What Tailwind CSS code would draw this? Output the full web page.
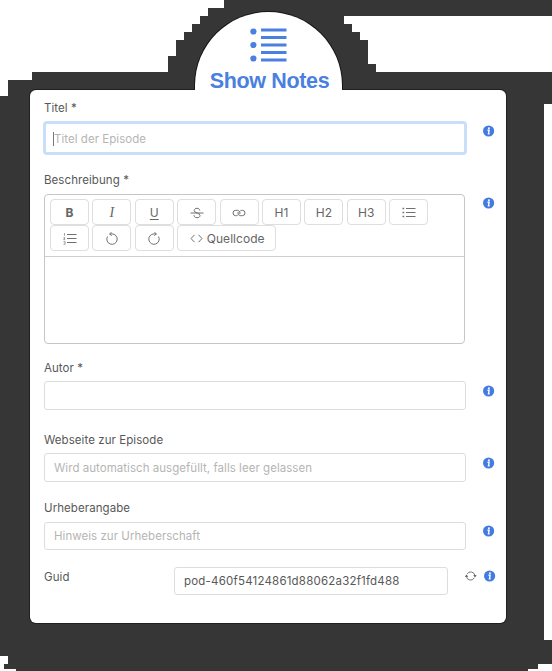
<!DOCTYPE html>
<html lang="de">
<head>
<meta charset="utf-8">
<title>Show Notes</title>
<script src="https://cdn.jsdelivr.net/npm/@tailwindcss/browser@4"></script>
</head>
<body class="relative h-[671px] w-[552px] overflow-hidden bg-[#363636] font-['Inter','Liberation_Sans',sans-serif] text-[11.5px] leading-4 tracking-[0.04px] text-[#585858]">
<svg class="absolute inset-0" width="552" height="671" shape-rendering="crispEdges" fill="#fff" aria-hidden="true">
  <path d="M0 0H224V8H208V16H200V24H192V32H184V40H176V56H168V72H32V80H8V96H0Z"/>
  <path d="M344 16H552V72H376V64H368V40H360V32H352V24H344Z"/>
  <path d="M544 104H552V640H544Z"/>
  <path d="M0 656H8V664H4V669H16V671H0Z"/>
  <path d="M538 664H552V671H528V669H538Z"/>
</svg>
<svg class="hidden" aria-hidden="true">
  <symbol id="info" viewBox="0 0 12 12"><circle cx="5.600" cy="6" r="5.600" fill="#447be0"/><circle cx="5.900" cy="3.300" r=".95" fill="#fff"/><path d="M4.500 5.300h1.600L5.500 8.800h1.100" fill="none" stroke="#fff" stroke-width="1.400"/></symbol>
</svg>
<main class="relative flex flex-col pl-[30px] pt-[12px]">
  <header class="ml-[165px] flex h-[78px] w-[147px] flex-col items-center rounded-t-[73.5px] bg-white shadow-[0_0_0_1px_#171717]">
    <svg class="mt-[16px] h-[34px] w-[38px] shrink-0" viewBox="0 0 38 34" fill="#4a80df"><circle cx="3.400" cy="3.500" r="3.100"/><circle cx="3.400" cy="17" r="3.100"/><circle cx="3.400" cy="30.500" r="3.100"/><path d="M11 .5H36.500v3H11zM11 8H36.500v3H11zM11 15.500H36.500v3H11zM11 23H36.500v3H11zM11 30.500H36.500v3H11z"/></svg>
    <h1 class="mt-[7px] whitespace-nowrap pl-[2px] font-['Liberation_Sans',Arial,sans-serif] text-[21.5px] font-bold leading-6 tracking-[-0.35px] text-[#4a80df]">Show Notes</h1>
  </header>
  <form class="relative flex h-[533px] w-[476px] flex-col rounded-[6px] bg-white pl-[14px] pt-[10px] shadow-[0_0_0_1px_#202020] [&_label]:tracking-[0.07px]">
    <div class="absolute left-[165px] top-[-1px] h-[2px] w-[147px] bg-white"></div>
    <section class="flex h-[71px] w-[451px] justify-between">
      <div class="w-[422px]">
        <label class="block h-[21px]">Titel *</label>
        <div class="-ml-px flex h-[34px] w-[424px] items-center rounded-[4px] border-[3px] border-[#c8def9] pl-[7px] pt-px text-[#b5b5b5]"><span class="h-[14px] w-px bg-[#777]"></span>Titel der Episode</div>
      </div>
      <svg class="mt-[25px] size-[12px]"><use href="#info"/></svg>
    </section>
    <section class="flex h-[188px] w-[451px] justify-between">
      <div class="w-[422px]">
        <label class="block h-[23px] pt-px">Beschreibung *</label>
        <div class="h-[150px] w-[421px] rounded-[4px] border border-[#c6c6c6]">
          <div class="flex h-[62px] flex-wrap content-start gap-x-[3.400px] border-b border-[#cfcfcf] pl-[5px] pt-[4px] text-[12px] text-[#666] [&>*]:flex [&>*]:h-[26px] [&>*]:w-[39px] [&>*]:items-center [&>*]:justify-center [&>*]:rounded-[4px] [&>*]:border [&>*]:border-[#dedede] [&>*]:pt-px [&_svg]:fill-none [&_svg]:stroke-[#707070]">
            <span class="font-bold">B</span>
            <span class="font-['Liberation_Serif',serif] text-[14px] italic">I</span>
            <span class="underline underline-offset-2">U</span>
            <span><svg width="14" height="12" viewBox="0 0 14 12"><path d="M.5 6h13M9.800 3.500C9.600 2 8.500 1.300 7 1.300S4.200 2 4.200 3.500c0 3 5.800 2 5.800 5 0 1.400-1.200 2.200-3 2.200S4.100 9.900 4 8.200"/></svg></span>
            <span><svg width="14" height="8" viewBox="0 0 14 8"><path d="M5.700 6.200C5.300 6.500 4.800 6.700 4.200 6.700H3.700a2.700 2.700 0 0 1 0-5.400h1.500C7 1.300 8 2.500 8 4c0 .5-.1.900-.3 1.200M8.300 1.800C8.700 1.500 9.200 1.300 9.800 1.300h.5a2.700 2.700 0 0 1 0 5.400H8.800C7 6.700 6 5.500 6 4c0-.5.1-.9.3-1.200"/></svg></span>
            <span>H1</span><span>H2</span><span>H3</span>
            <span><svg width="14" height="12" viewBox="0 0 14 12"><path d="M4 1.500H13.500M4 5.500H13.500M4 9.500H13.500"/><path d="M.5 1.500H2.200M.5 5.500H2.200M.5 9.500H2.200" stroke-width="1.600"/></svg></span>
            <span><svg width="14" height="12" viewBox="0 0 14 12"><path d="M4 1.500H13.500M4 5.500H13.500M4 9.500H13.500"/><path d="M1.500 .2v2.500M.5 4.700h1.500L.7 6.700h1.500M.5 8.700h1.600v2.500H.5" stroke-width=".7"/></svg></span>
            <span><svg width="14" height="14" viewBox="0 0 14 14"><path d="M2.500 4.500A5.200 5.200 0 1 0 7 1.900H4.500M6.700 0L4.700 1.900l2 2"/></svg></span>
            <span><svg width="14" height="14" viewBox="0 0 14 14"><path d="M11.500 4.500A5.200 5.200 0 1 1 7 1.900H9.500M7.300 0L9.300 1.900l-2 2"/></svg></span>
            <div class="!w-[99px] gap-[4px] pl-[1px]"><svg width="13" height="9" viewBox="0 0 13 9"><path d="M4.500 .8 1 4.500l3.500 3.700M8.500 .8 12 4.500 8.500 8.200"/></svg>Quellcode</div>
          </div>
        </div>
      </div>
      <svg class="mt-[26px] size-[12px]"><use href="#info"/></svg>
    </section>
    <section class="flex h-[72px] w-[451px] justify-between">
      <div class="w-[422px]">
        <label class="block h-[22px] pt-px">Autor *</label>
        <div class="h-[29px] rounded-[3px] border border-[#dddddd]"></div>
      </div>
      <svg class="mt-[26px] size-[12px]"><use href="#info"/></svg>
    </section>
    <section class="flex h-[68px] w-[451px] justify-between">
      <div class="w-[422px]">
        <label class="block h-[22px] pt-px">Webseite zur Episode</label>
        <div class="flex h-[29px] items-center rounded-[3px] border border-[#dddddd] pl-[9px] text-[#b5b5b5]">Wird automatisch ausgefüllt, falls leer gelassen</div>
      </div>
      <svg class="mt-[26px] size-[12px]"><use href="#info"/></svg>
    </section>
    <section class="flex h-[68px] w-[451px] justify-between">
      <div class="w-[422px]">
        <label class="block h-[23px] pt-px">Urheberangabe</label>
        <div class="flex h-[28px] items-center rounded-[3px] border border-[#dddddd] pl-[9px] text-[#b5b5b5]">Hinweis zur Urheberschaft</div>
      </div>
      <svg class="mt-[26px] size-[12px]"><use href="#info"/></svg>
    </section>
    <section class="flex w-[452px]">
      <label class="mt-[2px] w-[130px]">Guid</label>
      <div class="flex h-[28px] w-[274px] items-center rounded-[3px] border border-[#dddddd] pl-[9px] tracking-[0.2px]">pod-460f54124861d88062a32f1fd488</div>
      <svg class="ml-[17px] mt-[4px]" width="12" height="10" viewBox="0 0 12 10" fill="none" stroke="#666" stroke-width=".9"><path d="M2 3.200A4.200 4.200 0 0 1 9.900 4.500M9.300 6.800A4.200 4.200 0 0 1 1.400 5.500"/><path d="M8.300 4.200h3.400L10 6.200zM-.2 5.800h3.400L1.500 3.800z" fill="#444" stroke="none"/></svg>
      <svg class="ml-auto mt-[3px] size-[12px]"><use href="#info"/></svg>
    </section>
  </form>
</main>
</body>
</html>
